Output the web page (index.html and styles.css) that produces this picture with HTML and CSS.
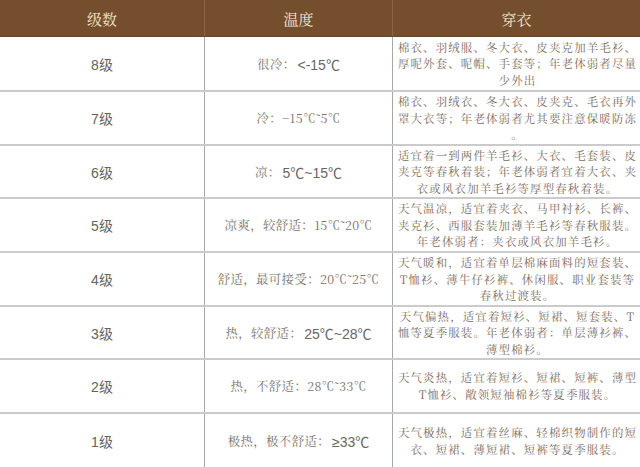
FILE: index.html
```html
<!DOCTYPE html>
<html lang="zh-CN">
<head>
<meta charset="utf-8">
<title>穿衣指数</title>
<link rel="stylesheet" href="styles.css">
</head>
<body>
<div class="table">
  <div class="row head">
    <div class="cell">级数</div>
    <div class="cell">温度</div>
    <div class="cell">穿衣</div>
  </div>
  <div class="row h55">
    <div class="cell lv">8级</div>
    <div class="cell temp">很冷： <span class="num">&lt;-15℃</span></div>
    <div class="cell wear">棉衣、羽绒服、冬大衣、皮夹克加羊毛衫、<br>厚呢外套、呢帽、手套等；年老体弱者尽量<br>少外出</div>
  </div>
  <div class="row h54">
    <div class="cell lv">7级</div>
    <div class="cell temp">冷：−15℃˜5℃</div>
    <div class="cell wear">棉衣、羽绒衣、冬大衣、皮夹克、毛衣再外<br>罩大衣等；年老体弱者尤其要注意保暖防冻<br>。</div>
  </div>
  <div class="row h53">
    <div class="cell lv">6级</div>
    <div class="cell temp">凉： <span class="num">5℃~15℃</span></div>
    <div class="cell wear">适宜着一到两件羊毛衫、大衣、毛套装、皮<br>夹克等春秋着装；年老体弱者宜着大衣、夹<br>衣或风衣加羊毛衫等厚型春秋着装。</div>
  </div>
  <div class="row h54">
    <div class="cell lv">5级</div>
    <div class="cell temp">凉爽，较舒适：15℃˜20℃</div>
    <div class="cell wear">天气温凉，适宜着夹衣、马甲衬衫、长裤、<br>夹克衫、西服套装加薄羊毛衫等春秋服装。<br>年老体弱者：夹衣或风衣加羊毛衫。</div>
  </div>
  <div class="row h54">
    <div class="cell lv">4级</div>
    <div class="cell temp">舒适，最可接受：20℃˜25℃</div>
    <div class="cell wear">天气暖和，适宜着单层棉麻面料的短套装、<br>T恤衫、薄牛仔衫裤、休闲服、职业套装等<br>春秋过渡装。</div>
  </div>
  <div class="row h53">
    <div class="cell lv">3级</div>
    <div class="cell temp">热，较舒适：<span class="num">25℃~28℃</span></div>
    <div class="cell wear">天气偏热，适宜着短衫、短裙、短套装、T<br>恤等夏季服装。年老体弱者：单层薄衫裤、<br>薄型棉衫。</div>
  </div>
  <div class="row h54">
    <div class="cell lv">2级</div>
    <div class="cell temp">热，不舒适：28℃˜33℃</div>
    <div class="cell wear">天气炎热，适宜着短衫、短裙、短裤、薄型<br>T恤衫、敞领短袖棉衫等夏季服装。</div>
  </div>
  <div class="row h53 last">
    <div class="cell lv">1级</div>
    <div class="cell temp">极热，极不舒适：<span class="num">≥33℃</span></div>
    <div class="cell wear">天气极热，适宜着丝麻、轻棉织物制作的短<br>衣、短裙、薄短裙、短裤等夏季服装。</div>
  </div>
</div>
</body>
</html>
```
FILE: styles.css
```css
html, body {
  margin: 0;
  padding: 0;
  background: #ffffff;
}
.table {
  width: 640px;
}
.row {
  display: grid;
  grid-template-columns: 205px 188px 247px;
  box-sizing: border-box;
  border-bottom: 2px solid #cbcbcb;
}
.row.last {
  border-bottom: none;
}
.h55 { height: 55px; }
.h54 { height: 54px; }
.h53 { height: 53px; }
.cell {
  display: flex;
  align-items: center;
  justify-content: center;
  text-align: center;
  border-right: 1px solid #a3aaa3;
  box-sizing: border-box;
  font-family: "Noto Serif CJK SC", "Liberation Serif", "Noto Sans CJK SC", serif;
}
.cell:last-child {
  border-right: none;
}
.head {
  height: 37px;
  background: #754f2d;
  border-bottom: 1px solid #6a4626;
}
.head .cell {
  color: #f4e6d2;
  font-size: 15px;
  border-right-color: #8a6642;
}
.lv {
  font-family: "Liberation Sans", "Noto Sans CJK SC", sans-serif;
  font-size: 14px;
  color: #66625c;
}
.temp {
  font-size: 12.4px;
  letter-spacing: 0.4px;
  color: #7a736b;
  white-space: nowrap;
}
.num {
  font-family: "Liberation Sans", "Noto Sans CJK SC", sans-serif;
  font-size: 14px;
  letter-spacing: 0;
  color: #6a6660;
  margin-left: 2px;
}
.wear {
  font-size: 11.4px;
  letter-spacing: 1.2px;
  line-height: 16.6px;
  color: #7a6b5a;
  white-space: nowrap;
  padding: 0 2px 0 4px;
}
```
